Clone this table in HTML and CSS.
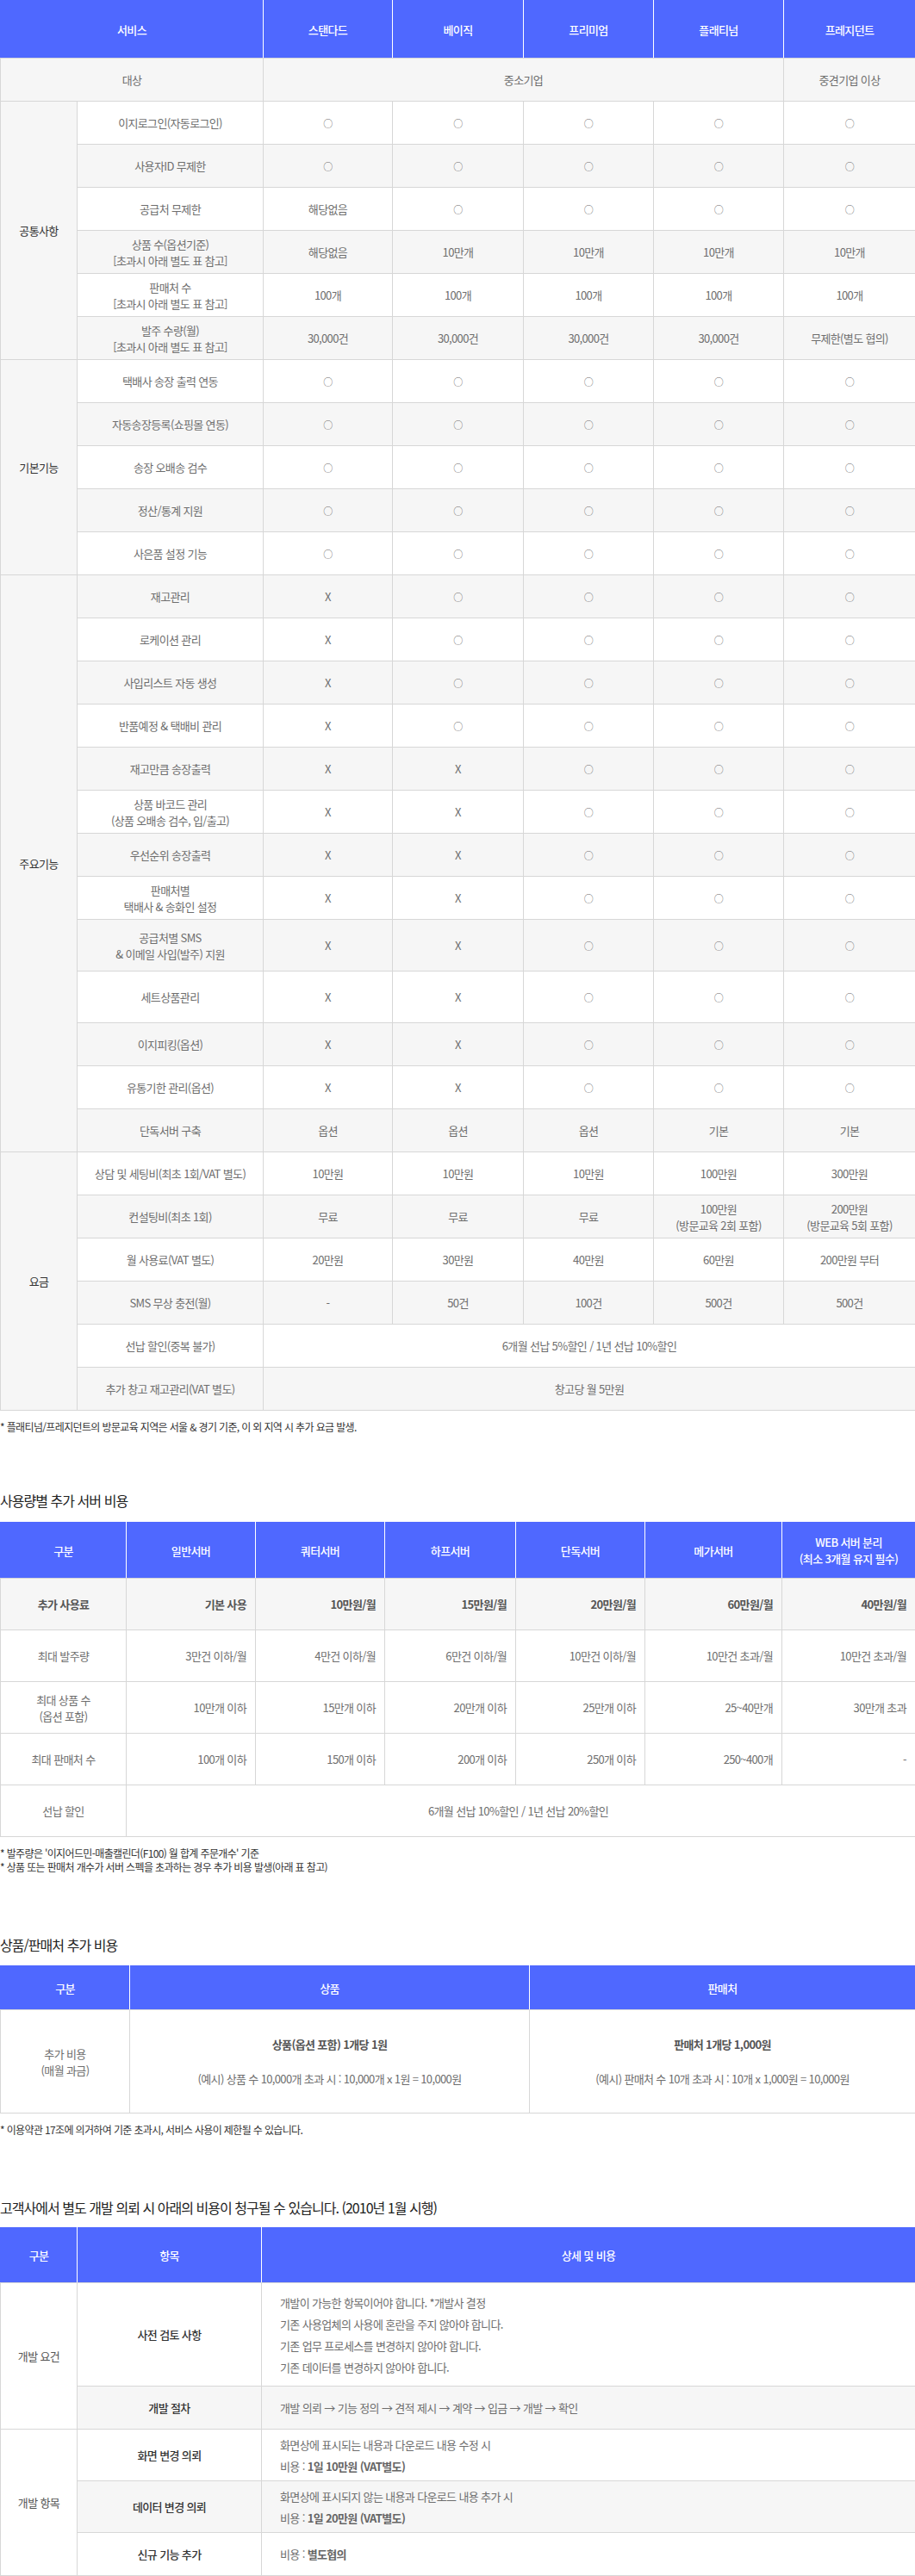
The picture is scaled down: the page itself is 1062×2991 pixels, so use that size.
FILE: index.html
```html
<!DOCTYPE html>
<html lang="ko">
<head>
<meta charset="utf-8">
<title>서비스 요금</title>
<link rel="stylesheet" href="styles.css">
</head>
<body>
<div class="page">

<table class="tbl t1">
  <colgroup>
    <col class="c1-cat"><col class="c1-item"><col class="c1-p1"><col class="c1-p2"><col class="c1-p3"><col class="c1-p4"><col class="c1-p5">
  </colgroup>
  <thead>
    <tr class="h67"><th colspan="2">서비스</th><th>스탠다드</th><th>베이직</th><th>프리미엄</th><th>플래티넘</th><th>프레지던트</th></tr>
  </thead>
  <tbody>
    <tr class="gray"><td colspan="2">대상</td><td colspan="4">중소기업</td><td>중견기업 이상</td></tr>

    <tr><td rowspan="6" class="cat">공통사항</td><td>이지로그인(자동로그인)</td><td><span class="o">○</span></td><td><span class="o">○</span></td><td><span class="o">○</span></td><td><span class="o">○</span></td><td><span class="o">○</span></td></tr>
    <tr class="gray"><td>사용자ID 무제한</td><td><span class="o">○</span></td><td><span class="o">○</span></td><td><span class="o">○</span></td><td><span class="o">○</span></td><td><span class="o">○</span></td></tr>
    <tr><td>공급처 무제한</td><td>해당없음</td><td><span class="o">○</span></td><td><span class="o">○</span></td><td><span class="o">○</span></td><td><span class="o">○</span></td></tr>
    <tr class="gray"><td>상품 수(옵션기준)<br>[초과시 아래 별도 표 참고]</td><td>해당없음</td><td>10만개</td><td>10만개</td><td>10만개</td><td>10만개</td></tr>
    <tr><td>판매처 수<br>[초과시 아래 별도 표 참고]</td><td>100개</td><td>100개</td><td>100개</td><td>100개</td><td>100개</td></tr>
    <tr class="gray"><td>발주 수량(월)<br>[초과시 아래 별도 표 참고]</td><td>30,000건</td><td>30,000건</td><td>30,000건</td><td>30,000건</td><td>무제한(별도 협의)</td></tr>

    <tr><td rowspan="5" class="cat">기본기능</td><td>택배사 송장 출력 연동</td><td><span class="o">○</span></td><td><span class="o">○</span></td><td><span class="o">○</span></td><td><span class="o">○</span></td><td><span class="o">○</span></td></tr>
    <tr class="gray"><td>자동송장등록(쇼핑몰 연동)</td><td><span class="o">○</span></td><td><span class="o">○</span></td><td><span class="o">○</span></td><td><span class="o">○</span></td><td><span class="o">○</span></td></tr>
    <tr><td>송장 오배송 검수</td><td><span class="o">○</span></td><td><span class="o">○</span></td><td><span class="o">○</span></td><td><span class="o">○</span></td><td><span class="o">○</span></td></tr>
    <tr class="gray"><td>정산/통계 지원</td><td><span class="o">○</span></td><td><span class="o">○</span></td><td><span class="o">○</span></td><td><span class="o">○</span></td><td><span class="o">○</span></td></tr>
    <tr><td>사은품 설정 기능</td><td><span class="o">○</span></td><td><span class="o">○</span></td><td><span class="o">○</span></td><td><span class="o">○</span></td><td><span class="o">○</span></td></tr>

    <tr class="gray"><td rowspan="13" class="cat">주요기능</td><td>재고관리</td><td>X</td><td><span class="o">○</span></td><td><span class="o">○</span></td><td><span class="o">○</span></td><td><span class="o">○</span></td></tr>
    <tr><td>로케이션 관리</td><td>X</td><td><span class="o">○</span></td><td><span class="o">○</span></td><td><span class="o">○</span></td><td><span class="o">○</span></td></tr>
    <tr class="gray"><td>사입리스트 자동 생성</td><td>X</td><td><span class="o">○</span></td><td><span class="o">○</span></td><td><span class="o">○</span></td><td><span class="o">○</span></td></tr>
    <tr><td>반품예정 &amp; 택배비 관리</td><td>X</td><td><span class="o">○</span></td><td><span class="o">○</span></td><td><span class="o">○</span></td><td><span class="o">○</span></td></tr>
    <tr class="gray"><td>재고만큼 송장출력</td><td>X</td><td>X</td><td><span class="o">○</span></td><td><span class="o">○</span></td><td><span class="o">○</span></td></tr>
    <tr><td>상품 바코드 관리<br>(상품 오배송 검수, 입/출고)</td><td>X</td><td>X</td><td><span class="o">○</span></td><td><span class="o">○</span></td><td><span class="o">○</span></td></tr>
    <tr class="gray"><td>우선순위 송장출력</td><td>X</td><td>X</td><td><span class="o">○</span></td><td><span class="o">○</span></td><td><span class="o">○</span></td></tr>
    <tr><td>판매처별<br>택배사 &amp; 송화인 설정</td><td>X</td><td>X</td><td><span class="o">○</span></td><td><span class="o">○</span></td><td><span class="o">○</span></td></tr>
    <tr class="gray h60"><td>공급처별 SMS<br>&amp; 이메일 사입(발주) 지원</td><td>X</td><td>X</td><td><span class="o">○</span></td><td><span class="o">○</span></td><td><span class="o">○</span></td></tr>
    <tr class="h60"><td>세트상품관리</td><td>X</td><td>X</td><td><span class="o">○</span></td><td><span class="o">○</span></td><td><span class="o">○</span></td></tr>
    <tr class="gray"><td>이지피킹(옵션)</td><td>X</td><td>X</td><td><span class="o">○</span></td><td><span class="o">○</span></td><td><span class="o">○</span></td></tr>
    <tr><td>유통기한 관리(옵션)</td><td>X</td><td>X</td><td><span class="o">○</span></td><td><span class="o">○</span></td><td><span class="o">○</span></td></tr>
    <tr class="gray"><td>단독서버 구축</td><td>옵션</td><td>옵션</td><td>옵션</td><td>기본</td><td>기본</td></tr>

    <tr><td rowspan="6" class="cat">요금</td><td>상담 및 세팅비(최초 1회/VAT 별도)</td><td>10만원</td><td>10만원</td><td>10만원</td><td>100만원</td><td>300만원</td></tr>
    <tr class="gray"><td>컨설팅비(최초 1회)</td><td>무료</td><td>무료</td><td>무료</td><td>100만원<br>(방문교육 2회 포함)</td><td>200만원<br>(방문교육 5회 포함)</td></tr>
    <tr><td>월 사용료(VAT 별도)</td><td>20만원</td><td>30만원</td><td>40만원</td><td>60만원</td><td>200만원 부터</td></tr>
    <tr class="gray"><td>SMS 무상 충전(월)</td><td>-</td><td>50건</td><td>100건</td><td>500건</td><td>500건</td></tr>
    <tr><td>선납 할인(중복 불가)</td><td colspan="5">6개월 선납 5%할인 / 1년 선납 10%할인</td></tr>
    <tr class="gray"><td>추가 창고 재고관리(VAT 별도)</td><td colspan="5">창고당 월 5만원</td></tr>
  </tbody>
</table>
<p class="note n1">* 플래티넘/프레지던트의 방문교육 지역은 서울 &amp; 경기 기준, 이 외 지역 시 추가 요금 발생.</p>

<h2 class="title s2">사용량별 추가 서버 비용</h2>
<table class="tbl t2">
  <colgroup>
    <col class="c2-a"><col class="c2-b"><col class="c2-b"><col class="c2-c"><col class="c2-b"><col class="c2-d"><col class="c2-e">
  </colgroup>
  <thead>
    <tr class="h65"><th>구분</th><th>일반서버</th><th>쿼터서버</th><th>하프서버</th><th>단독서버</th><th>메가서버</th><th>WEB 서버 분리<br>(최소 3개월 유지 필수)</th></tr>
  </thead>
  <tbody>
    <tr class="gray h60 strong"><td class="first">추가 사용료</td><td>기본 사용</td><td>10만원/월</td><td>15만원/월</td><td>20만원/월</td><td>60만원/월</td><td>40만원/월</td></tr>
    <tr class="h60"><td class="first">최대 발주량</td><td>3만건 이하/월</td><td>4만건 이하/월</td><td>6만건 이하/월</td><td>10만건 이하/월</td><td>10만건 초과/월</td><td>10만건 초과/월</td></tr>
    <tr class="h60"><td class="first">최대 상품 수<br>(옵션 포함)</td><td>10만개 이하</td><td>15만개 이하</td><td>20만개 이하</td><td>25만개 이하</td><td>25~40만개</td><td>30만개 초과</td></tr>
    <tr class="h60"><td class="first">최대 판매처 수</td><td>100개 이하</td><td>150개 이하</td><td>200개 이하</td><td>250개 이하</td><td>250~400개</td><td>-</td></tr>
    <tr class="h60"><td class="first">선납 할인</td><td colspan="6" class="center">6개월 선납 10%할인 / 1년 선납 20%할인</td></tr>
  </tbody>
</table>
<p class="note n2">* 발주량은 '이지어드민-매출캘린더(F100) 월 합계 주문개수' 기준<br>* 상품 또는 판매처 개수가 서버 스펙을 초과하는 경우 추가 비용 발생(아래 표 참고)</p>

<h2 class="title s3">상품/판매처 추가 비용</h2>
<table class="tbl t3">
  <colgroup>
    <col class="c3-a"><col class="c3-b"><col class="c3-c">
  </colgroup>
  <thead>
    <tr class="h51"><th>구분</th><th>상품</th><th>판매처</th></tr>
  </thead>
  <tbody>
    <tr class="h120"><td>추가 비용<br>(매월 과금)</td>
      <td><strong class="lead">상품(옵션 포함) 1개당 1원</strong><span class="ex">(예시) 상품 수 10,000개 초과 시 : 10,000개 x 1원 = 10,000원</span></td>
      <td><strong class="lead">판매처 1개당 1,000원</strong><span class="ex">(예시) 판매처 수 10개 초과 시 : 10개 x 1,000원 = 10,000원</span></td></tr>
  </tbody>
</table>
<p class="note n3">* 이용약관 17조에 의거하여 기준 초과시, 서비스 사용이 제한될 수 있습니다.</p>

<h2 class="title s4">고객사에서 별도 개발 의뢰 시 아래의 비용이 청구될 수 있습니다. (2010년 1월 시행)</h2>
<table class="tbl t4">
  <colgroup>
    <col class="c4-a"><col class="c4-b"><col class="c4-c">
  </colgroup>
  <thead>
    <tr class="h64"><th>구분</th><th>항목</th><th>상세 및 비용</th></tr>
  </thead>
  <tbody>
    <tr class="h120"><td rowspan="2" class="cat4">개발 요건</td><td class="item">사전 검토 사항</td>
      <td class="detail"><p>개발이 가능한 항목이어야 합니다. *개발사 결정</p><p>기존 사용업체의 사용에 혼란을 주지 않아야 합니다.</p><p>기존 업무 프로세스를 변경하지 않아야 합니다.</p><p>기존 데이터를 변경하지 않아야 합니다.</p></td></tr>
    <tr class="gray"><td class="item">개발 절차</td><td class="detail"><p>개발 의뢰 → 기능 정의 → 견적 제시 → 계약 → 입금 → 개발 → 확인</p></td></tr>
    <tr class="h60"><td rowspan="3" class="cat4">개발 항목</td><td class="item">화면 변경 의뢰</td>
      <td class="detail"><p>화면상에 표시되는 내용과 다운로드 내용 수정 시</p><p>비용 : <b>1일 10만원 (VAT별도)</b></p></td></tr>
    <tr class="gray h60"><td class="item">데이터 변경 의뢰</td>
      <td class="detail"><p>화면상에 표시되지 않는 내용과 다운로드 내용 추가 시</p><p>비용 : <b>1일 20만원 (VAT별도)</b></p></td></tr>
    <tr><td class="item">신규 기능 추가</td><td class="detail"><p>비용 : <b>별도협의</b></p></td></tr>
  </tbody>
</table>

</div>
</body>
</html>
```
FILE: styles.css
```css
* { box-sizing: border-box; }

html, body {
  margin: 0;
  padding: 0;
  background: #fff;
}

body {
  font-family: "Noto Sans CJK KR", "Noto Sans", sans-serif;
  color: #333;
  letter-spacing: -0.04em;
}

.page {
  width: 1062px;
}

.tbl {
  width: 1062px;
  border-collapse: collapse;
  table-layout: fixed;
}

.tbl th,
.tbl td {
  border: 1px solid #d7d7d7;
  text-align: center;
  vertical-align: middle;
  font-size: 13px;
  line-height: 19px;
  font-weight: 400;
  color: #6e6e6e;
  padding: 0 4px;
  height: 50px;
}

.tbl thead th {
  background: #4f68ff;
  color: #fff;
  font-weight: 500;
  border-top: 1px solid #4f68ff;
  border-left: 1px solid #fff;
  border-right: 1px solid #fff;
  border-bottom: 1px solid #d7d7d7;
}

.tbl thead th:first-child { border-left-color: #4f68ff; }
.tbl thead th:last-child { border-right-color: #4f68ff; }

.tbl tr.gray td { background: #f6f6f6; }

.tbl td.cat {
  background: #f6f6f6;
  color: #333;
}

.o {
  font-size: 11px;
}

/* row heights */
.h67 th { height: 67px; }
.h65 th { height: 65px; }
.h64 th { height: 64px; }
.h51 th { height: 51px; }
.tbl tr.h60 td { height: 60px; }
.tbl tr.h120 td { height: 120px; }

/* table 1 columns */
.c1-cat { width: 89px; }
.c1-item { width: 216px; }
.c1-p1 { width: 150px; }
.c1-p2 { width: 152px; }
.c1-p3 { width: 151px; }
.c1-p4 { width: 151px; }
.c1-p5 { width: 153px; }

/* notes & titles */
.note {
  margin: 11px 0 0;
  font-size: 12px;
  line-height: 16px;
  color: #333;
}

.title {
  margin: 0;
  font-size: 16px;
  line-height: 24px;
  font-weight: 400;
  color: #222;
  letter-spacing: -0.06em;
}

.s2 { margin-top: 65px; }
.s3 { margin-top: 70px; }
.s4 { margin-top: 70px; }

.t2 { margin-top: 13px; }
.t3 { margin-top: 12px; }
.t4 { margin-top: 11px; }

/* table 2 */
.c2-a { width: 146px; }
.c2-b { width: 150px; }
.c2-c { width: 152px; }
.c2-d { width: 159px; }
.c2-e { width: 155px; }

.t2 td { text-align: right; padding-right: 10px; }
.t2 td.first { text-align: center; padding-right: 4px; }
.t2 td.center { text-align: center; }
.t2 tr.strong td { font-weight: 700; color: #555; }

/* table 3 */
.c3-a { width: 150px; }
.c3-b { width: 464px; }
.c3-c { width: 448px; }

.t3 .lead {
  display: block;
  font-weight: 700;
  color: #555;
  margin-bottom: 21px;
}

.t3 .ex {
  display: block;
}

/* table 4 */
.c4-a { width: 89px; }
.c4-b { width: 214px; }
.c4-c { width: 759px; }

.t4 td.cat4 { color: #555; }
.t4 td.item { color: #333; font-weight: 500; }
.t4 td.detail {
  text-align: left;
  padding-left: 21px;
}
.t4 td.detail p {
  margin: 0;
  line-height: 25px;
}
.t4 td.detail b {
  font-weight: 700;
  color: #666;
}
```
